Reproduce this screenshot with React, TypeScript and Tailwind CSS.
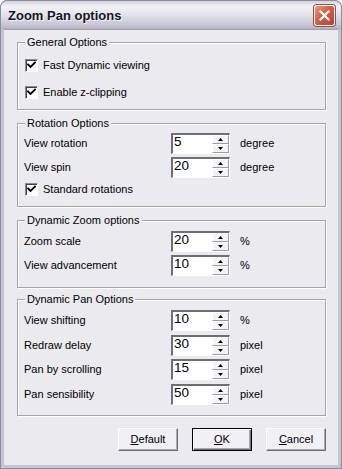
import React from 'react';

// Classic sunken 3D checkbox with a black tick
function Check({ label, checked = true }: { label: string; checked?: boolean }) {
  return (
    <div className="flex items-center gap-[5px] h-[13px]">
      <span className="w-[13px] h-[13px] bg-white border-t border-l border-t-[#8a8a96] border-l-[#8a8a96] border-b border-r border-b-white border-r-white shadow-[inset_1px_1px_0_#404048] flex items-center justify-center">
        {checked && (
          <svg width="9" height="9" viewBox="0 0 9 9">
            <path d="M1 3.5 L3.5 6 L8 1.5" fill="none" stroke="#000" strokeWidth="1.8" strokeLinecap="square" />
          </svg>
        )}
      </span>
      <span>{label}</span>
    </div>
  );
}

function Arrow({ up }: { up?: boolean }) {
  return (
    <span className="flex-1 bg-[#f4f4f7] border-t border-l border-t-white border-l-white border-b border-r border-b-[#9c9ca6] border-r-[#9c9ca6] flex items-center justify-center">
      <svg width="5" height="3" viewBox="0 0 5 3">
        {up ? <path d="M0 3 L2.5 0 L5 3 Z" fill="#000" /> : <path d="M0 0 L2.5 3 L5 0 Z" fill="#000" />}
      </svg>
    </span>
  );
}

function Spin({ value }: { value: string }) {
  return (
    <div className="w-[59px] h-[21px] flex bg-white border-t-2 border-l-2 border-t-[#6e6e78] border-l-[#6e6e78] border-b border-r border-b-white border-r-white">
      <span className="flex-1 pl-[1px] text-[13.5px] leading-[13px] text-black">{value}</span>
      <span className="w-[17px] flex flex-col">
        <Arrow up />
        <Arrow />
      </span>
    </div>
  );
}

function Row({ label, value, unit }: { label: string; value: string; unit: string }) {
  return (
    <div className="flex items-center h-[21px]">
      <span className="w-[147px]">{label}</span>
      <Spin value={value} />
      <span className="ml-[10px]">{unit}</span>
    </div>
  );
}

function Group({ title, className, children }: { title: string; className: string; children: React.ReactNode }) {
  return (
    <div className={`relative w-[309px] ml-[13px] border border-[#a4a4ae] shadow-[1px_1px_0_#fff,inset_1px_1px_0_#fff] ${className}`}>
      <span className="absolute left-[7px] top-[-8px] px-[2px] bg-[#ebeaef] leading-[14px]">{title}</span>
      {children}
    </div>
  );
}

function Btn({ children, isDefault }: { children: React.ReactNode; isDefault?: boolean }) {
  return (
    <button
      className={`w-[60px] h-[23px] bg-[#f1f0f4] ${
        isDefault
          ? 'border border-black shadow-[inset_1px_1px_0_#fff,inset_-1px_-1px_0_#6e6e78,inset_-2px_-2px_0_#a8a8b2]'
          : 'border border-t-white border-l-white border-b-[#6e6e78] border-r-[#6e6e78] shadow-[inset_-1px_-1px_0_#a8a8b2]'
      } text-[11px] text-black flex items-center justify-center`}
    >
      {children}
    </button>
  );
}

export default function App() {
  return (
    <div className="w-[342px] h-[469px] flex flex-col font-['Liberation_Sans',Arial,sans-serif] text-[11px] text-black bg-[#8c8ca0] rounded-t-[7px] overflow-hidden">
      {/* Title bar */}
      <div className="h-[29px] shrink-0 flex items-center justify-between pl-[7px] pr-[6px] pt-[1px] rounded-t-[7px] border-t border-x border-[#8c8ca0] bg-[linear-gradient(to_bottom,#d4d4de_0%,#f2f2f6_20%,#e2e2ea_50%,#c6c6d4_85%,#b2b2c2_100%)]">
        <span className="font-bold text-[13px] text-[#16161e] [text-shadow:1px_1px_0_#f4f4f8]">Zoom Pan options</span>
        <span className="w-[21px] h-[21px] rounded-[3px] border border-white shadow-[0_0_0_1px_#a34a3c] bg-[linear-gradient(135deg,#e89a86_0%,#d2604a_45%,#b8402c_100%)] flex items-center justify-center">
          <svg width="11" height="11" viewBox="0 0 11 11">
            <path d="M1.5 1.5 L9.5 9.5 M9.5 1.5 L1.5 9.5" stroke="#fff" strokeWidth="2.2" strokeLinecap="square" />
          </svg>
        </span>
      </div>

      {/* Frame + client area */}
      <div className="flex-1 flex px-[3px] pb-[3px] border-x border-b border-[#8c8ca0] bg-[#c4c4d2]">
        <div className="flex-1 flex flex-col pt-[12px] bg-[#ebeaef] border-t border-[#9e9eae]">
          <Group title="General Options" className="h-[68px] pt-[16px] pl-[7px] flex flex-col gap-[14px]">
            <Check label="Fast Dynamic viewing" />
            <Check label="Enable z-clipping" />
          </Group>

          <Group title="Rotation Options" className="h-[84px] mt-[13px] pt-[9px] pl-[6px] flex flex-col gap-[3px]">
            <Row label="View rotation" value="5" unit="degree" />
            <Row label="View spin" value="20" unit="degree" />
            <div className="pl-[1px] pt-[2px]">
              <Check label="Standard rotations" />
            </div>
          </Group>

          <Group title="Dynamic Zoom options" className="h-[68px] mt-[13px] pt-[10px] pl-[6px] flex flex-col gap-[3px]">
            <Row label="Zoom scale" value="20" unit="%" />
            <Row label="View advancement" value="10" unit="%" />
          </Group>

          <Group title="Dynamic Pan Options" className="h-[117px] mt-[11px] pt-[10px] pl-[6px] flex flex-col gap-[3.5px]">
            <Row label="View shifting" value="10" unit="%" />
            <Row label="Redraw delay" value="30" unit="pixel" />
            <Row label="Pan by scrolling" value="15" unit="pixel" />
            <Row label="Pan sensibility" value="50" unit="pixel" />
          </Group>

          <div className="mt-[12px] flex justify-end gap-[14px] pr-[12px]">
            <Btn>
              <span className="underline">D</span>efault
            </Btn>
            <Btn isDefault>
              <span className="underline">O</span>K
            </Btn>
            <Btn>
              <span className="underline">C</span>ancel
            </Btn>
          </div>
        </div>
      </div>
    </div>
  );
}
